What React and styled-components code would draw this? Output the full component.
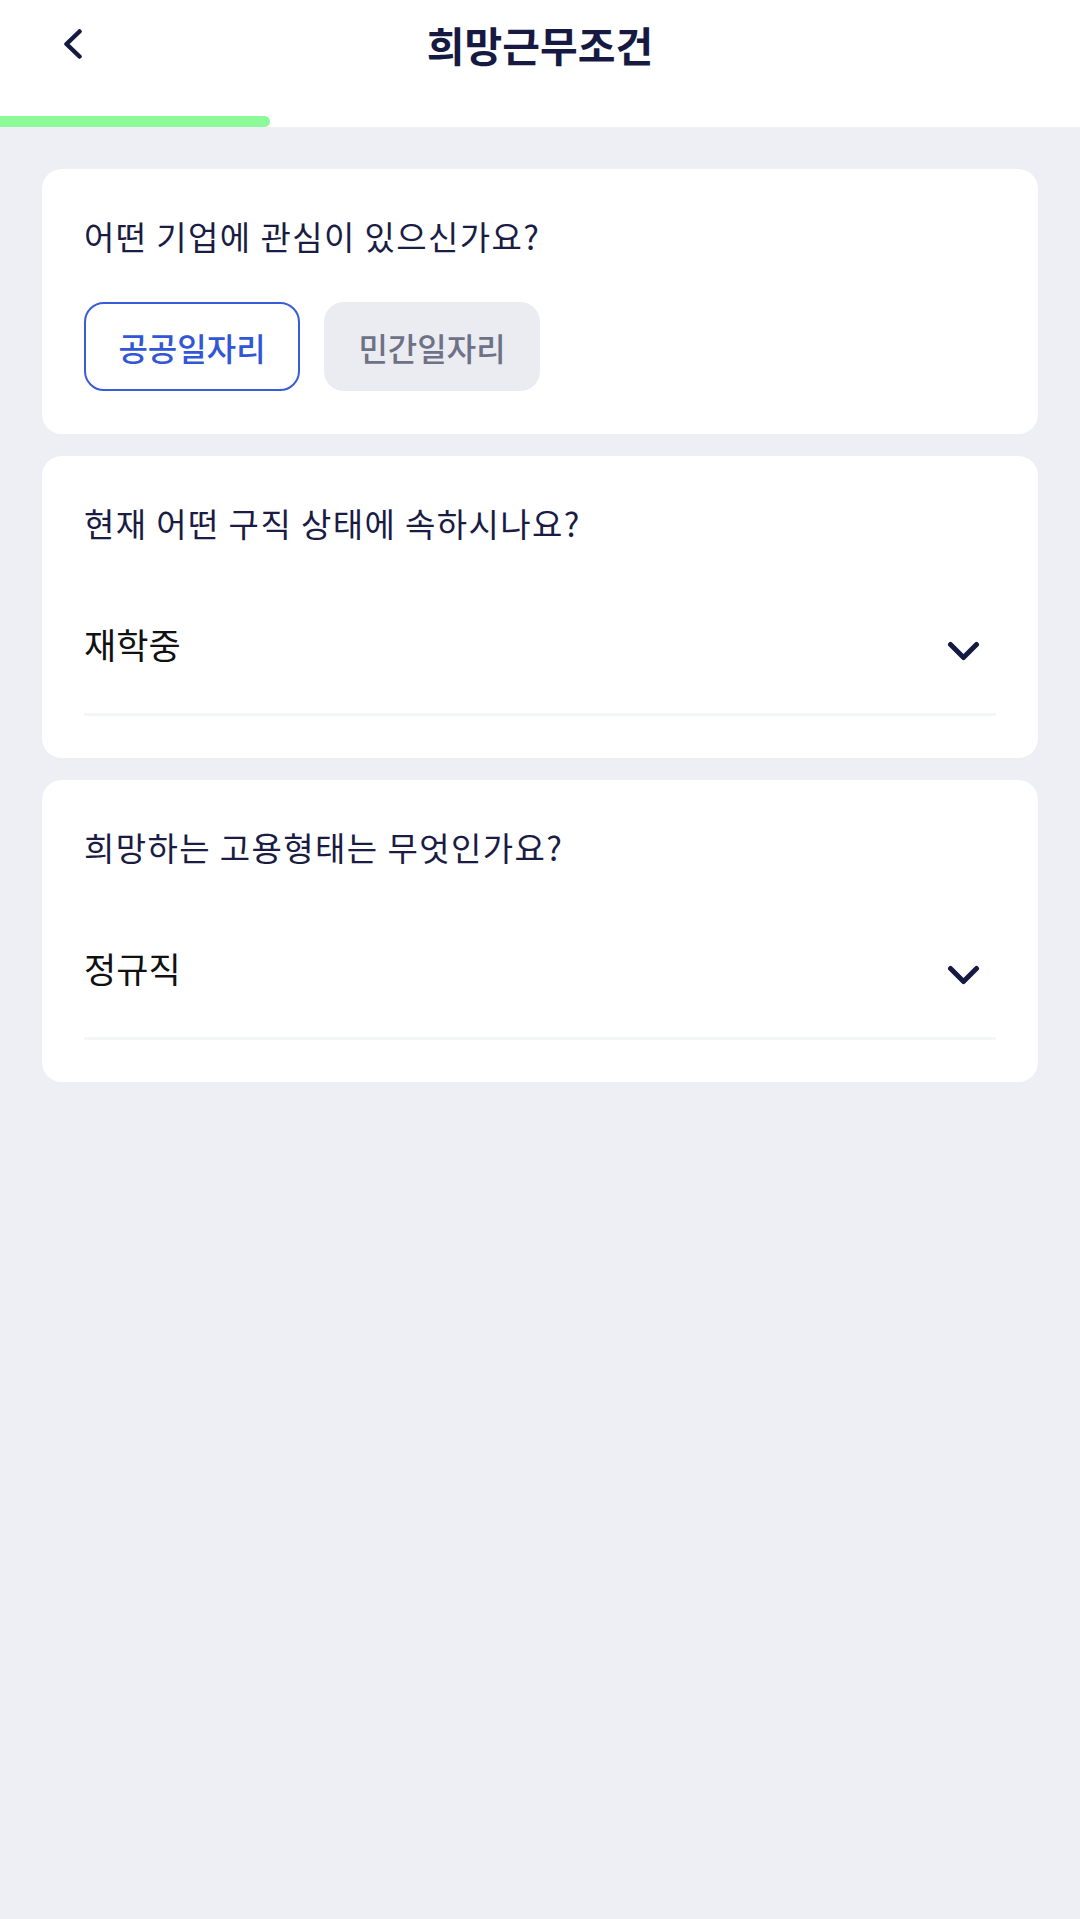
import styled, { createGlobalStyle } from "styled-components";

const GlobalStyle = createGlobalStyle`
  * { box-sizing: border-box; }
  html, body {
    margin: 0;
    padding: 0;
    background: #eeeff4;
    font-family: "Noto Sans CJK KR", "Noto Sans", sans-serif;
  }
  #root { min-height: 1919px; }
`;

const NAVY = "#161a42";

const BackIcon = () => (
  <svg width="18" height="30" viewBox="0 0 18 30" fill="none">
    <polyline
      points="15.5,2.5 2.5,15 15.5,27.5"
      stroke={NAVY}
      strokeWidth="4.5"
      strokeLinecap="round"
      strokeLinejoin="round"
    />
  </svg>
);

const ChevronDown = () => (
  <svg width="33" height="20" viewBox="0 0 33 20" fill="none">
    <polyline
      points="3.5,3.5 16.5,16.5 29.5,3.5"
      stroke={NAVY}
      strokeWidth="5"
      strokeLinecap="round"
      strokeLinejoin="round"
    />
  </svg>
);

const App = () => {
  return (
    <>
      <GlobalStyle />
      <Page>
        <Header>
          <NavRow>
            <BackButton aria-label="뒤로">
              <BackIcon />
            </BackButton>
            <Title>희망근무조건</Title>
            <span />
          </NavRow>
          <Progress>
            <ProgressFill style={{ width: "25%" }} />
          </Progress>
        </Header>

        <Content>
          <Card>
            <Question>어떤 기업에 관심이 있으신가요?</Question>
            <Choices>
              <Choice $active>공공일자리</Choice>
              <Choice>민간일자리</Choice>
            </Choices>
          </Card>

          <Card $select>
            <Question>현재 어떤 구직 상태에 속하시나요?</Question>
            <SelectRow>
              <SelectValue>재학중</SelectValue>
              <ChevronBox>
                <ChevronDown />
              </ChevronBox>
            </SelectRow>
          </Card>

          <Card $select>
            <Question>희망하는 고용형태는 무엇인가요?</Question>
            <SelectRow>
              <SelectValue>정규직</SelectValue>
              <ChevronBox>
                <ChevronDown />
              </ChevronBox>
            </SelectRow>
          </Card>
        </Content>
      </Page>
    </>
  );
};

const Page = styled.div`
  min-height: 1919px;
  background: #eeeff4;
`;

const Header = styled.header`
  background: #ffffff;
  display: flex;
  flex-direction: column;
`;

const NavRow = styled.div`
  height: 88px;
  display: grid;
  grid-template-columns: 200px 1fr 200px;
  align-items: center;
  margin-bottom: 28px;
`;

const BackButton = styled.button`
  justify-self: start;
  margin-left: 64px;
  padding: 0;
  border: none;
  background: transparent;
  display: flex;
  align-items: center;
`;

const Title = styled.h1`
  margin: 0;
  text-align: center;
  font-size: 41px;
  line-height: 56px;
  font-weight: 700;
  color: ${NAVY};
`;

const Progress = styled.div`
  height: 11px;
  background: #ffffff;
`;

const ProgressFill = styled.div`
  height: 100%;
  background: #8cfa98;
  border-radius: 0 6px 6px 0;
`;

const Content = styled.main`
  display: flex;
  flex-direction: column;
  gap: 22px;
  padding: 42px 42px 0;
`;

const Card = styled.section`
  background: #ffffff;
  border-radius: 20px;
  padding: ${(p) => (p.$select ? "44px 42px 42px" : "44px 42px 43px")};
`;

const Question = styled.p`
  margin: 0;
  font-size: 33px;
  line-height: 46px;
  letter-spacing: 1.4px;
  font-weight: 400;
  color: #1a1c44;
`;

const Choices = styled.div`
  display: flex;
  gap: 24px;
  margin-top: 43px;
`;

const Choice = styled.button`
  width: 216px;
  height: 89px;
  border-radius: 20px;
  font-family: inherit;
  font-size: 32px;
  font-weight: 500;
  border: 2.5px solid ${(p) => (p.$active ? "#3a5cd8" : "#ebecf1")};
  background: ${(p) => (p.$active ? "#ffffff" : "#ebecf1")};
  color: ${(p) => (p.$active ? "#3157d6" : "#6e7286")};
  padding: 0;
`;

const SelectRow = styled.div`
  display: flex;
  align-items: center;
  justify-content: space-between;
  margin-top: 75px;
  padding-bottom: 46px;
  border-bottom: 3px solid #f4f5f7;
`;

const SelectValue = styled.span`
  font-size: 35px;
  line-height: 46px;
  color: #111111;
`;

const ChevronBox = styled.span`
  display: flex;
  margin-right: 16px;
  margin-top: 14px;
`;

export default App;
